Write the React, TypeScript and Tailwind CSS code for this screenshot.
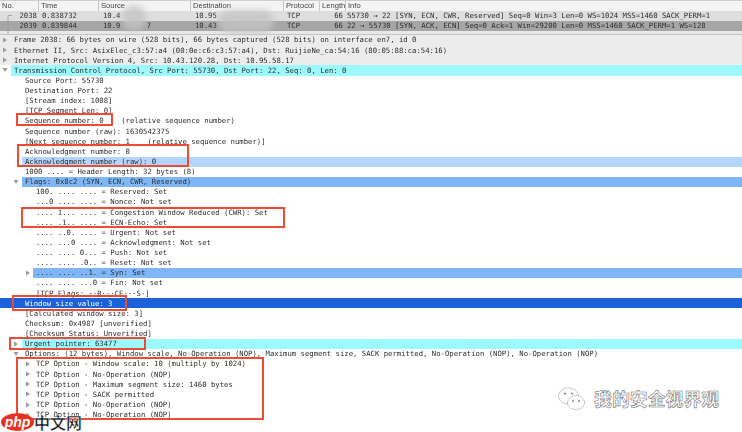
const rowBase = "flex h-[10.13px] items-center whitespace-pre leading-none";

type RowProps = {
  text: string;
  pad: string;
  band?: string;
  arrow?: "right" | "down";
  arrowPos?: string;
};

function Arrow({ dir, pos }: { dir: "right" | "down"; pos: string }) {
  return (
    <svg width="6" height="6" viewBox="0 0 6 6" className={"absolute top-[2px] " + pos}>
      {dir === "right" ? (
        <path d="M1 0.5 L5 3 L1 5.5 Z" fill="#9a9a9a" />
      ) : (
        <path d="M0.5 1 L5.5 1 L3 5 Z" fill="#9a9a9a" />
      )}
    </svg>
  );
}

function Row({ text, pad, band = "", arrow, arrowPos = "left-[2px]" }: RowProps) {
  return (
    <div className={"relative " + rowBase}>
      {arrow && <Arrow dir={arrow} pos={arrowPos} />}
      <div className={"flex h-full flex-1 items-center " + pad + " " + band}>{text}</div>
    </div>
  );
}

function Head({ w, label }: { w: string; label: string }) {
  return (
    <div className={"flex h-full items-center overflow-hidden whitespace-nowrap border-r border-[#c8c8c8] pl-[2px] " + w}>{label}</div>
  );
}

function Packet({ bg, no, time, src, dst, len, info }: { bg: string; no: string; time: string; src: string; dst: string; len: string; info: string }) {
  return (
    <div className={"flex h-[10px] items-center whitespace-pre leading-none " + bg}>
      <div className="w-[37px] text-right">{no}</div>
      <div className="w-[65px] pl-[5px]">{time}</div>
      <div className="w-[92px] pl-[1px]">{src}</div>
      <div className="w-[92px] pl-[1px]">{dst}</div>
      <div className="w-[40px] pl-[1px]">TCP</div>
      <div className="w-[17px] text-right">{len}</div>
      <div className="pl-[4px]">{info}</div>
    </div>
  );
}

const Box = ({ c }: { c: string }) => (
  <div className={"absolute border-2 border-[#ee4b35] " + c} />
);

const Blur = ({ c }: { c: string }) => (
  <div className={"absolute rounded-full blur-[3px] " + c} />
);

export default function App() {
  return (
    <div className="relative h-[432px] w-[742px] overflow-hidden bg-white font-['DejaVu_Sans_Mono','Liberation_Mono',monospace] text-[7.27px] text-[#2e2e2e]">
      <div className="blur-[0.4px]">
        <div className="flex h-[11px] items-center border-t border-[#cfcfcf] bg-[#f4f4f4] font-['Liberation_Sans',sans-serif] text-[7.6px] leading-none text-[#444]">
          <Head w="w-[39px]" label="No." />
          <Head w="w-[60px] pl-[1px]" label="Time" />
          <Head w="w-[92px]" label="Source" />
          <Head w="w-[93px]" label="Destination" />
          <Head w="w-[36px]" label="Protocol" />
          <Head w="w-[26px]" label="Length" />
          <div className="pl-[2px]">Info</div>
        </div>
        <Packet bg="bg-[#dedede]" no="2038" time="0.838732" src="10.4" dst="10.95" len="66" info="55730 → 22 [SYN, ECN, CWR, Reserved] Seq=0 Win=3 Len=0 WS=1024 MSS=1460 SACK_PERM=1" />
        <Packet bg="bg-[#a6a6a6]" no="2039" time="0.839844" src="10.9      7" dst="10.43" len="66" info="22 → 55730 [SYN, ACK, ECN] Seq=0 Ack=1 Win=29200 Len=0 MSS=1460 SACK_PERM=1 WS=128" />
        <div className="h-[4px] border-b border-[#c4c4c4] bg-[#e8e8e8]" />
        <div className="bg-[#ececec]">
          <Row arrow="right" pad="pl-[14px]" text="Frame 2038: 66 bytes on wire (528 bits), 66 bytes captured (528 bits) on interface en7, id 0" />
          <Row arrow="right" pad="pl-[14px]" text="Ethernet II, Src: AsixElec_c3:57:a4 (00:0e:c6:c3:57:a4), Dst: RuijieNe_ca:54:16 (80:05:88:ca:54:16)" />
          <Row arrow="right" pad="pl-[14px]" text="Internet Protocol Version 4, Src: 10.43.120.28, Dst: 10.95.58.17" />
        </div>
        <div className="bg-white">
          <Row arrow="down" pad="ml-[11px] pl-[3px]" band="bg-[#9cfaff]" text="Transmission Control Protocol, Src Port: 55730, Dst Port: 22, Seq: 0, Len: 0" />
          <Row pad="pl-[25px]" text="Source Port: 55730" />
          <Row pad="pl-[25px]" text="Destination Port: 22" />
          <Row pad="pl-[25px]" text="[Stream index: 1008]" />
          <Row pad="pl-[25px]" text="[TCP Segment Len: 0]" />
          <Row pad="pl-[25px]" text="Sequence number: 0    (relative sequence number)" />
          <Row pad="pl-[25px]" text="Sequence number (raw): 1630542375" />
          <Row pad="pl-[25px]" text="[Next sequence number: 1    (relative sequence number)]" />
          <Row pad="pl-[25px]" text="Acknowledgment number: 0" />
          <Row pad="ml-[22px] pl-[3px]" band="bg-[#b3d5fb]" text="Acknowledgment number (raw): 0" />
          <Row pad="pl-[25px]" text="1000 .... = Header Length: 32 bytes (8)" />
          <Row arrow="down" arrowPos="left-[13px]" pad="ml-[22px] pl-[3px]" band="bg-[#7fb6f7]" text="Flags: 0x8c2 (SYN, ECN, CWR, Reserved)" />
          <Row pad="pl-[36px]" text="100. .... .... = Reserved: Set" />
          <Row pad="pl-[36px]" text="...0 .... .... = Nonce: Not set" />
          <Row pad="pl-[36px]" text=".... 1... .... = Congestion Window Reduced (CWR): Set" />
          <Row pad="pl-[36px]" text=".... .1.. .... = ECN-Echo: Set" />
          <Row pad="pl-[36px]" text=".... ..0. .... = Urgent: Not set" />
          <Row pad="pl-[36px]" text=".... ...0 .... = Acknowledgment: Not set" />
          <Row pad="pl-[36px]" text=".... .... 0... = Push: Not set" />
          <Row pad="pl-[36px]" text=".... .... .0.. = Reset: Not set" />
          <Row arrow="right" arrowPos="left-[25px]" pad="ml-[33px] pl-[3px]" band="bg-[#7fb6f7]" text=".... .... ..1. = Syn: Set" />
          <Row pad="pl-[36px]" text=".... .... ...0 = Fin: Not set" />
          <Row pad="pl-[36px]" text="[TCP Flags: ··R···CE···S·]" />
          <Row pad="pl-[25px]" band="bg-[#1a62d9] text-white" text="Window size value: 3" />
          <Row pad="pl-[25px]" text="[Calculated window size: 3]" />
          <Row pad="pl-[25px]" text="Checksum: 0x4987 [unverified]" />
          <Row pad="pl-[25px]" text="[Checksum Status: Unverified]" />
          <Row arrow="right" arrowPos="left-[13px]" pad="ml-[22px] pl-[3px]" band="bg-[#9cfaff]" text="Urgent pointer: 63477" />
          <Row arrow="down" arrowPos="left-[13px]" pad="pl-[25px]" text="Options: (12 bytes), Window scale, No-Operation (NOP), Maximum segment size, SACK permitted, No-Operation (NOP), No-Operation (NOP)" />
          <Row arrow="right" arrowPos="left-[25px]" pad="pl-[36px]" text="TCP Option - Window scale: 10 (multiply by 1024)" />
          <Row arrow="right" arrowPos="left-[25px]" pad="pl-[36px]" text="TCP Option - No-Operation (NOP)" />
          <Row arrow="right" arrowPos="left-[25px]" pad="pl-[36px]" text="TCP Option - Maximum segment size: 1460 bytes" />
          <Row arrow="right" arrowPos="left-[25px]" pad="pl-[36px]" text="TCP Option - SACK permitted" />
          <Row arrow="right" arrowPos="left-[25px]" pad="pl-[36px]" text="TCP Option - No-Operation (NOP)" />
          <Row arrow="right" arrowPos="left-[25px]" pad="pl-[36px]" text="TCP Option - No-Operation (NOP)" />
        </div>
      </div>

      <svg width="10" height="22" viewBox="0 0 10 22" className="absolute left-[3px] top-[12px]" fill="none" stroke="#9a9a9a" strokeWidth="0.8">
        <path d="M5 22 V3.5 H9" />
      </svg>

      <Blur c="left-[122px] top-[5px] h-[26px] w-[24px] bg-[#c4c4c4]/80" />
      <Blur c="left-[218px] top-[10px] h-[23px] w-[56px] bg-[#c4c4c4]/80" />

      <Box c="left-[16px] top-[113px] h-[13px] w-[97px]" />
      <Box c="left-[17px] top-[144px] h-[23px] w-[172px]" />
      <Box c="left-[21px] top-[207px] h-[21px] w-[264px]" />
      <Box c="left-[12px] top-[295px] h-[16px] w-[115px]" />
      <Box c="left-[9px] top-[337px] h-[13px] w-[137px]" />
      <Box c="left-[16px] top-[357px] h-[63px] w-[248px]" />

      <div className="absolute left-[558px] top-[387px] flex items-center gap-[9px] whitespace-nowrap">
        <svg width="27" height="24" viewBox="0 0 27 24" fill="none" stroke="#777" strokeWidth="0.7" strokeDasharray="1.2 0.8">
          <ellipse cx="10.5" cy="9" rx="10" ry="8" />
          <ellipse cx="18" cy="15.5" rx="8.5" ry="7" fill="white" />
          <circle cx="7" cy="6.5" r="0.8" fill="#666" />
          <circle cx="14" cy="6.5" r="0.8" fill="#666" />
          <circle cx="15" cy="14" r="0.7" fill="#666" />
          <circle cx="21" cy="14" r="0.7" fill="#666" />
        </svg>
        <span className="font-['Noto_Sans_CJK_SC',sans-serif] text-[17.9px] font-bold leading-none text-white [-webkit-text-stroke:0.6px_#777]">我的安全视界观</span>
      </div>

      <div className="absolute bottom-[1px] left-[1px] flex items-center whitespace-nowrap">
        <span className="flex h-[18px] w-[33px] items-center justify-center rounded-[50%] bg-[#e8321f] font-['Liberation_Sans',sans-serif] text-[14px] font-bold italic leading-none text-white">php</span>
        <span className="font-['Noto_Sans_CJK_SC',sans-serif] text-[16px] font-bold leading-none text-[#111] [-webkit-text-stroke:0.4px_white]">中文网</span>
      </div>
    </div>
  );
}
